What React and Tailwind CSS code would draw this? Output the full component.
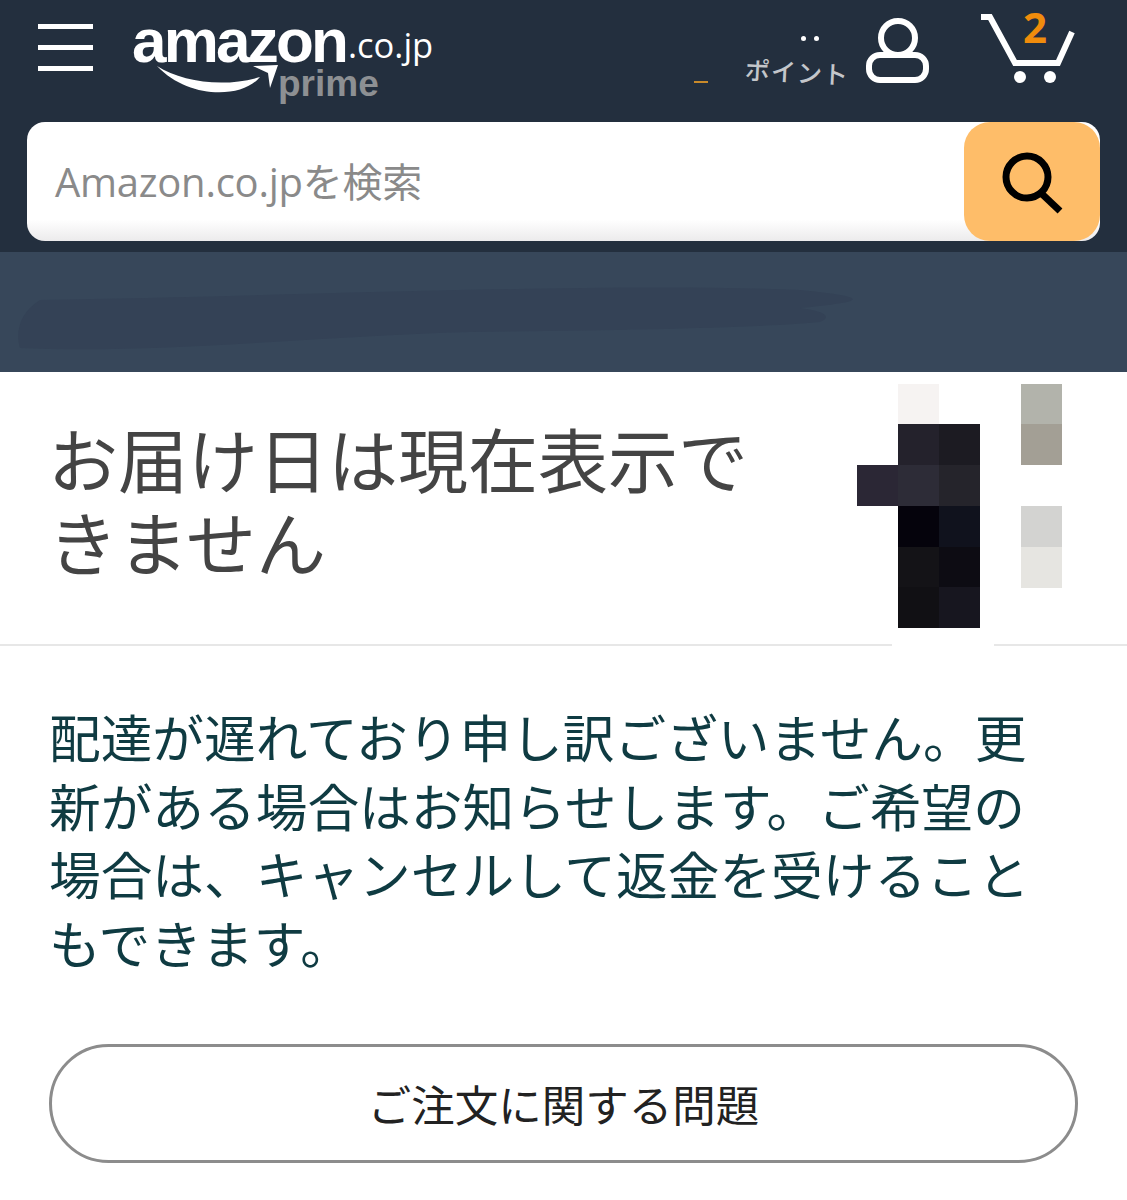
const jp = '"Noto Sans CJK JP", "Noto Sans", sans-serif';
const lib = '"Liberation Sans", sans-serif';
const open = '"Open Sans", sans-serif';

function Logo() {
  return (
    <div className="relative w-[310px] h-[106px] shrink-0">
      <span className="absolute left-0 top-0 text-[62px] leading-[70px] font-bold tracking-[-2.8px] text-white" style={{ fontFamily: lib }}>amazon</span>
      <span className="absolute left-[216px] top-[17px] text-[34.5px] leading-[44px] text-white" style={{ fontFamily: open }}>.co.jp</span>
      <span className="absolute left-[146px] top-[56px] text-[37px] leading-[44px] font-bold text-[#8d9093]" style={{ fontFamily: lib }}>prime</span>
      <svg className="absolute left-[22px] top-[58px]" width="130" height="36" viewBox="0 0 130 36" fill="none">
        <path d="M3 2 C28 18 70 24 106 13 C88 35 34 35 3 2 Z" fill="#fff" />
        <path d="M99 2 L124 1 L116 24 L114 9 Z" fill="#fff" />
      </svg>
    </div>
  );
}

function Mosaic() {
  const cells = [
    ['left-[898px] top-[384px]', 'bg-[#f6f3f2]'],
    ['left-[898px] top-[424px]', 'bg-[#24222c]'],
    ['left-[939px] top-[424px]', 'bg-[#1c1b22]'],
    ['left-[857px] top-[465px]', 'bg-[#2b2735]'],
    ['left-[898px] top-[465px]', 'bg-[#2d2c37]'],
    ['left-[939px] top-[465px]', 'bg-[#25242b]'],
    ['left-[898px] top-[506px]', 'bg-[#05030c]'],
    ['left-[939px] top-[506px]', 'bg-[#10121d]'],
    ['left-[898px] top-[547px]', 'bg-[#141317]'],
    ['left-[939px] top-[547px]', 'bg-[#0d0c13]'],
    ['left-[898px] top-[587px]', 'bg-[#111014]'],
    ['left-[939px] top-[587px]', 'bg-[#17161f]'],
    ['left-[1021px] top-[384px]', 'bg-[#b2b3ab]'],
    ['left-[1021px] top-[424px]', 'bg-[#a39f95]'],
    ['left-[1021px] top-[506px]', 'bg-[#d3d3d1]'],
    ['left-[1021px] top-[547px]', 'bg-[#e6e5e1]'],
  ];
  return (
    <>
      {cells.map(([pos, col], i) => {
        const classes = `absolute w-[41px] h-[41px] ${pos} ${col}`;
        return <div key={i} className={classes} />;
      })}
      <div className="absolute left-[892px] top-[640px] w-[102px] h-[10px] bg-white" />
    </>
  );
}

export default function App() {
  return (
    <div className="relative w-[1127px] h-[1200px] bg-white overflow-hidden" style={{ fontFamily: jp }}>
      <header className="bg-[#232f3e] h-[252px] flex flex-col">
        <div className="h-[122px] flex items-start relative">
          <div className="ml-[38px] mt-[24px] w-[55px] flex flex-col gap-[16px]">
            <div className="h-[5px] bg-white" />
            <div className="h-[5px] bg-white" />
            <div className="h-[5px] bg-white" />
          </div>
          <div className="ml-[39px] mt-[6px]"><Logo /></div>
          <span className="absolute left-[745px] top-[53px] text-[25px] leading-[36px] tracking-[1px] font-medium text-[#c3c6ca] rotate-[3deg]">ポイント</span>
          <span className="absolute left-[801px] top-[36px] flex gap-[8px]">
            <i className="block w-[5px] h-[5px] rounded-full bg-white" />
            <i className="block w-[5px] h-[5px] rounded-full bg-white" />
          </span>
          <span className="absolute left-[694px] top-[81px] w-[14px] h-[2px] bg-[#c98a2a]" />
          <svg className="absolute left-[864px] top-[18px]" width="68" height="66" viewBox="0 0 68 66" fill="none" stroke="#fff" strokeWidth="6">
            <circle cx="34" cy="20" r="17" />
            <rect x="5" y="37" width="57" height="25" rx="11" />
          </svg>
          <svg className="absolute left-[980px] top-[14px]" width="96" height="72" viewBox="0 0 96 72" fill="none">
            <path d="M1 3 H10 L35 49 H78 L92 18" stroke="#fff" strokeWidth="6" />
            <circle cx="40" cy="63" r="6" fill="#fff" />
            <circle cx="70" cy="63" r="6" fill="#fff" />
          </svg>
          <span className="absolute left-[1023px] top-[5px] text-[42px] leading-[44px] font-bold text-[#f08c0c]" style={{ fontFamily: open }}>2</span>
        </div>
        <div className="mx-[27px] h-[119px] rounded-[18px] flex overflow-hidden bg-gradient-to-b from-white from-[82%] to-[#ecebec]">
          <div className="flex-1 flex items-center pl-[28px] pt-[1px] text-[40px] tracking-[-0.25px] text-[#8a8a8a]" style={{ fontFamily: '"Open Sans", "Noto Sans CJK JP", sans-serif' }}>Amazon.co.jpを検索</div>
          <div className="w-[136px] bg-[#febd69] rounded-[26px] flex items-center justify-center pt-[3px]">
            <svg width="66" height="66" viewBox="0 0 66 66" fill="none" stroke="#000">
              <circle cx="28" cy="27" r="21" strokeWidth="7" />
              <path d="M43 44 L61 61" strokeWidth="7" />
            </svg>
          </div>
        </div>
      </header>

      <div className="relative h-[120px] bg-[#37475a]">
        <svg className="absolute inset-0" width="1127" height="120" viewBox="0 0 1127 120">
          <path d="M20 96 C160 102 320 84 470 80 C620 78 760 76 820 70 C830 66 830 60 800 56 C860 50 880 46 800 38 C600 30 300 44 40 48 C20 60 15 80 20 96 Z" fill="#344256" />
        </svg>
      </div>

      <section className="h-[274px] border-b-2 border-[#e7e7e7] pl-[48px] pt-[44px]">
        <h1 className="w-[710px] text-[70px] leading-[83px] font-normal text-[#444]">お届け日は現在表示できません</h1>
      </section>

      <section className="pl-[49px] pt-[56px]">
        <p className="w-[990px] text-[51.7px] leading-[68.5px] font-normal text-[#0f3b42]">配達が遅れており申し訳ございません。更新がある場合はお知らせします。ご希望の場合は、キャンセルして返金を受けることもできます。</p>
        <button className="mt-[68px] block w-[1029px] h-[119px] rounded-full border-[3px] border-[#8c8c8c] bg-white text-[43.5px] text-[#222]">ご注文に関する問題</button>
      </section>

      <Mosaic />
    </div>
  );
}
